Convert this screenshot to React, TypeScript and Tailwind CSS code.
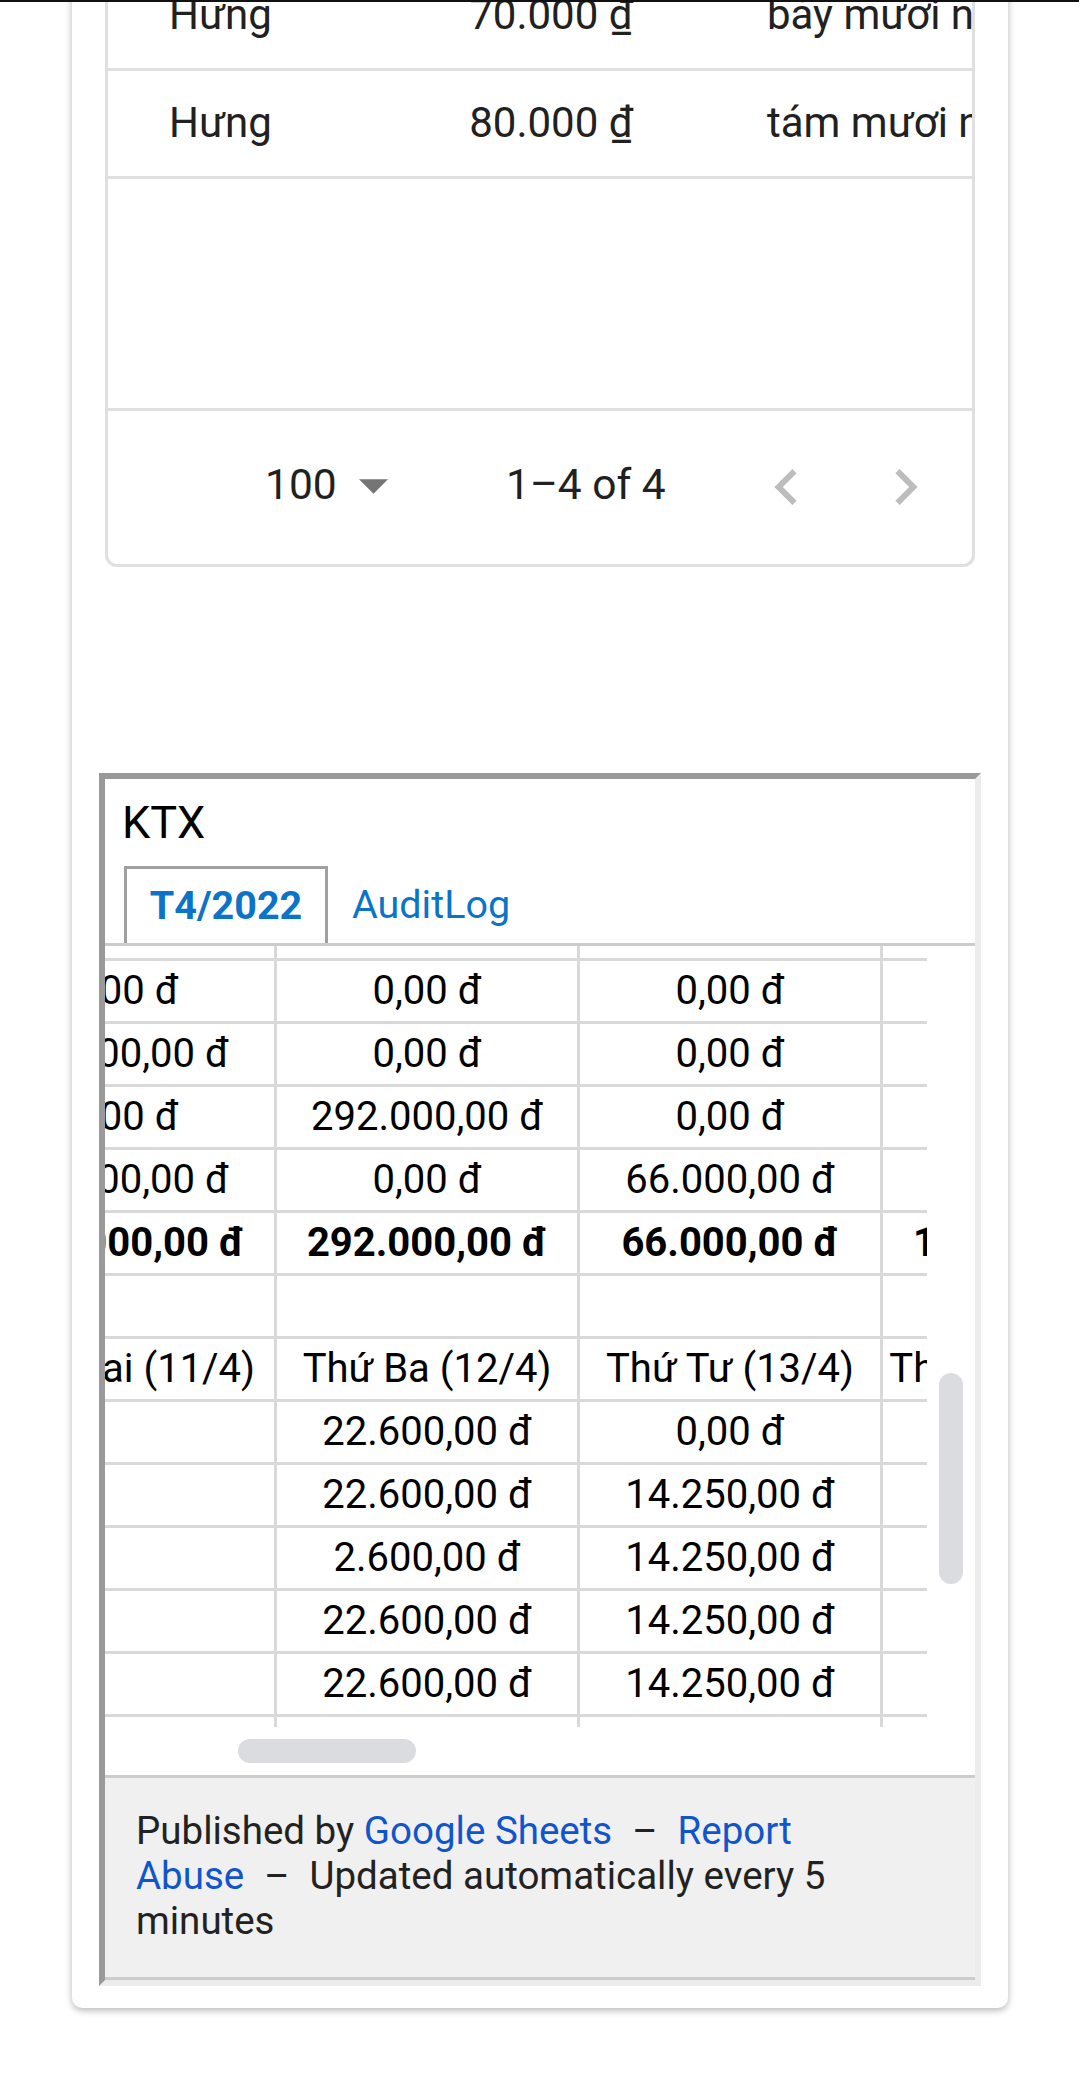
import React from 'react';

type Cell = string;

const orders = [
  { name: 'Hưng', amount: '70.000 ₫', words: 'bảy mươi nghìn đồng' },
  { name: 'Hưng', amount: '80.000 ₫', words: 'tám mươi nghìn đồng' },
];

const gridRows: { cells: Cell[]; bold?: boolean }[] = [
  { cells: ['0,00 đ', '0,00 đ', '0,00 đ', ''] },
  { cells: ['70.000,00 đ', '0,00 đ', '0,00 đ', ''] },
  { cells: ['0,00 đ', '292.000,00 đ', '0,00 đ', ''] },
  { cells: ['80.000,00 đ', '0,00 đ', '66.000,00 đ', ''] },
  { cells: ['150.000,00 đ', '292.000,00 đ', '66.000,00 đ', '158.000,00 đ'], bold: true },
  { cells: ['', '', '', ''] },
  { cells: ['Thứ Hai (11/4)', 'Thứ Ba (12/4)', 'Thứ Tư (13/4)', 'Thứ Năm (14/4)'] },
  { cells: ['', '22.600,00 đ', '0,00 đ', ''] },
  { cells: ['', '22.600,00 đ', '14.250,00 đ', ''] },
  { cells: ['', '2.600,00 đ', '14.250,00 đ', ''] },
  { cells: ['', '22.600,00 đ', '14.250,00 đ', ''] },
  { cells: ['', '22.600,00 đ', '14.250,00 đ', ''] },
];

function OrdersTable() {
  return (
    <div className="mx-[6px] rounded-b-[12px] border-[3px] border-t-0 border-[#e0e0e0] text-[#212121]">
      {orders.map((o, i) => (
        <div
          key={i}
          className="flex h-[108px] items-center overflow-hidden whitespace-nowrap border-b-[3px] border-[#e0e0e0] pb-[2px] text-[42px]"
        >
          <div className="w-[221px] shrink-0 pl-[61px]">{o.name}</div>
          <div className="w-[304px] shrink-0 text-right">{o.amount}</div>
          <div className="shrink-0 pl-[134px]">{o.words}</div>
        </div>
      ))}
      <div className="h-[232px] border-b-[3px] border-[#e0e0e0]" />
      <div className="flex h-[153px] items-center pb-[6px] pl-[157px] text-[42.5px]">
        <div className="flex w-[241px] shrink-0 items-center">
          <span>100</span>
          <svg viewBox="7 10 10 5" className="ml-[22px] mt-[4px] h-[15px] w-[29px]" fill="#757575">
            <path d="M7 10l5 5 5-5z" />
          </svg>
        </div>
        <div className="w-[268px] shrink-0">1–4 of 4</div>
        <svg viewBox="8 6 7.41 12" className="mt-[4px] h-[36px] w-[23px]" fill="#bdbdbd">
          <path d="M15.41 16.59L10.83 12l4.58-4.59L14 6l-6 6 6 6 1.41-1.41z" />
        </svg>
        <svg viewBox="8.59 6 7.41 12" className="ml-[98px] mt-[4px] h-[36px] w-[23px]" fill="#bdbdbd">
          <path d="M8.59 16.59L13.17 12 8.59 7.41 10 6l6 6-6 6-1.41-1.41z" />
        </svg>
      </div>
    </div>
  );
}

function GridRow({ cells, bold, h, line = true }: { cells: Cell[]; bold?: boolean; h: string; line?: boolean }) {
  return (
    <div className={`flex ${h} ${line ? 'border-b-[3px]' : ''} border-[#d9d9d9] ${bold ? 'font-bold' : ''}`}>
      {cells.map((c, i) => (
        <div
          key={i}
          className="flex w-[303px] shrink-0 items-center justify-center whitespace-nowrap border-r-[3px] border-[#d9d9d9]"
        >
          {c}
        </div>
      ))}
    </div>
  );
}

function SheetEmbed() {
  return (
    <div className="mt-[206px] border-[6px] border-b-[#ececec] border-l-[#9a9a9a] border-r-[#ececec] border-t-[#9a9a9a] bg-white">
      <div className="flex h-[87px] items-center pl-[17px] text-[45px] text-black">KTX</div>
      <div className="flex items-end border-b-[3px] border-[#cccccc] pl-[19px] text-[39.5px]">
        <div className="flex h-[77px] w-[204px] items-center justify-center border-[3px] border-b-0 border-[#a0a0a0] font-bold text-[#0b73c8]">
          T4/2022
        </div>
        <div className="flex h-[77px] items-center px-[24px] text-[#0b73c8]">AuditLog</div>
      </div>
      <div className="flex h-[781px]">
        <div className="w-[822px] shrink-0 overflow-hidden text-[40px] text-black">
          <div className="-ml-[131px] w-[1212px]">
            <GridRow cells={['', '', '', '']} h="h-[15px]" />
            {gridRows.map((r, i) => (
              <GridRow key={i} cells={r.cells} bold={r.bold} h="h-[63px]" />
            ))}
            <GridRow cells={['', '', '', '']} h="h-[10px]" line={false} />
          </div>
        </div>
        <div className="flex-1 pl-[12px] pt-[427px]">
          <div className="h-[211px] w-[24px] rounded-full bg-[#dadce0]" />
        </div>
      </div>
      <div className="h-[48px] pl-[133px] pt-[12px]">
        <div className="h-[24px] w-[178px] rounded-full bg-[#dadce0]" />
      </div>
      <div className="border-y-[3px] border-[#cccccc] bg-[#f0f0f0] pb-[34px] pl-[31px] pr-[99px] pt-[30px] text-[38.5px] leading-[45px] text-[#222222]">
        Published by <a className="text-[#1155cc]">Google Sheets</a>
        <span className="px-[20px]">–</span>
        <a className="text-[#1155cc]">Report Abuse</a>
        <span className="px-[20px]">–</span>
        Updated automatically every 5 minutes
      </div>
    </div>
  );
}

export default function App() {
  return (
    <div className="relative min-h-[2080px] overflow-hidden bg-white font-['Roboto','Liberation_Sans',sans-serif]">
      <div className="absolute inset-x-0 top-0 z-10 h-[2px] bg-[#111111]" />
      <div className="-mt-[37px] ml-[72px] w-[936px] rounded-b-[10px] bg-white px-[27px] pb-[22px] shadow-[0_3px_6px_rgba(0,0,0,0.22),0_0_12px_rgba(0,0,0,0.08)]">
        <OrdersTable />
        <SheetEmbed />
      </div>
    </div>
  );
}
